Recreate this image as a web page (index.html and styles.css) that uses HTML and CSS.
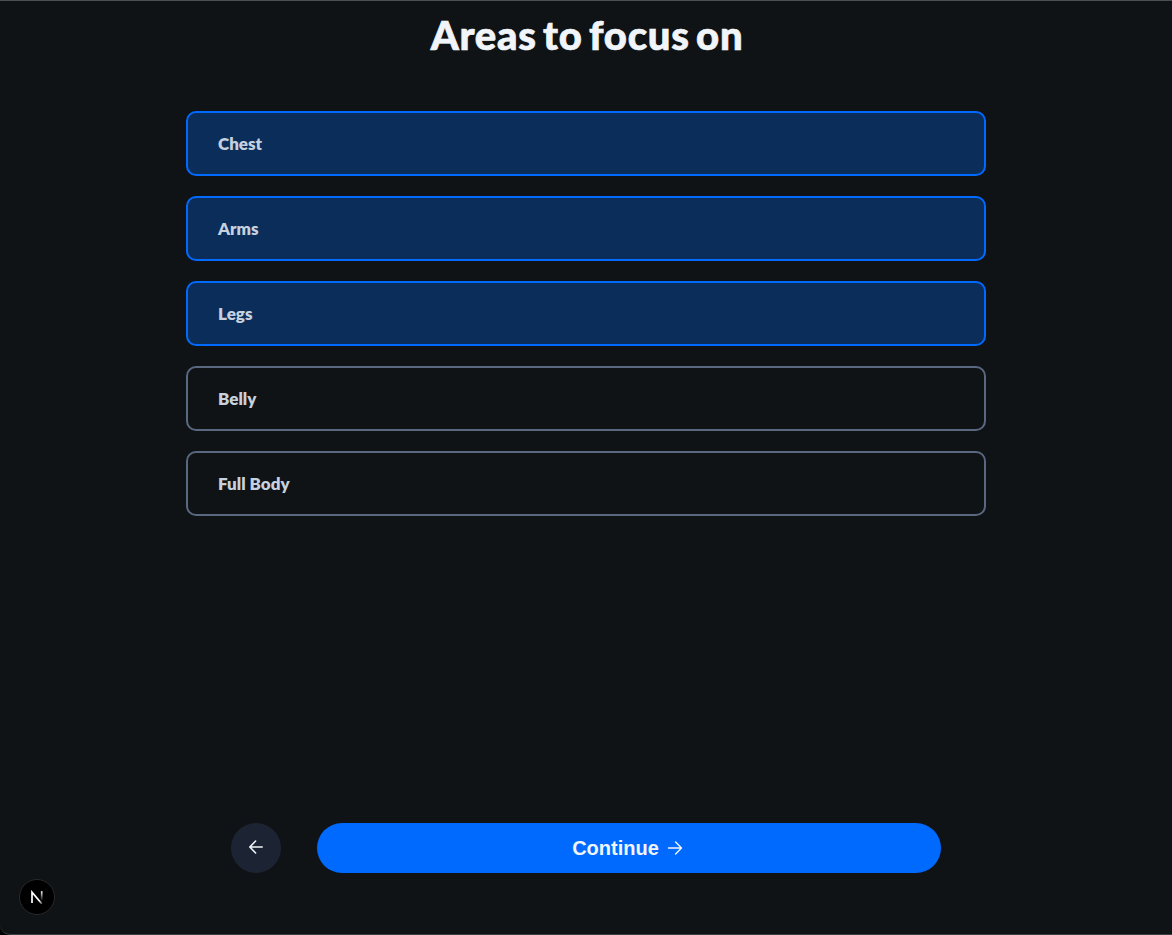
FILE: index.html
```html
<!DOCTYPE html>
<html lang="en">
<head>
<meta charset="utf-8">
<title>Areas to focus on</title>
<link rel="stylesheet" href="styles.css">
</head>
<body>
<main class="page">
  <h1 class="title">Areas to focus on</h1>
  <div class="options">
    <div class="option selected">Chest</div>
    <div class="option selected">Arms</div>
    <div class="option selected">Legs</div>
    <div class="option">Belly</div>
    <div class="option">Full Body</div>
  </div>
  <footer class="actions">
    <button class="back" aria-label="Back">
      <svg width="20" height="20" viewBox="0 0 20 20" fill="none" stroke="currentColor" stroke-width="1.6" stroke-linecap="round" stroke-linejoin="round"><path d="M16.2 10H4M9.6 4L3.8 10l5.8 6"/></svg>
    </button>
    <button class="continue"><span>Continue</span>
      <svg width="16" height="16" viewBox="0 0 16 16" fill="none" stroke="currentColor" stroke-width="1.4" stroke-linecap="round" stroke-linejoin="round"><path d="M1.5 8h13M8.6 2l5.9 6-5.9 6"/></svg>
    </button>
  </footer>
</main>
<div class="badge">
  <svg width="14" height="14" viewBox="0 0 14 14" fill="none" stroke-width="1.7">
    <defs>
      <linearGradient id="diag" gradientUnits="userSpaceOnUse" x1="7" y1="7" x2="12" y2="14"><stop stop-color="#fff"/><stop offset=".5" stop-color="#fff"/><stop offset="1" stop-color="#fff" stop-opacity=".3"/></linearGradient>
      <linearGradient id="stem" gradientUnits="userSpaceOnUse" x1="11" y1="1" x2="11" y2="11"><stop stop-color="#fff"/><stop offset="1" stop-color="#fff" stop-opacity="0"/></linearGradient>
    </defs>
    <path d="M2 13V2.2l9.8 11.6" stroke="url(#diag)"/>
    <path d="M11.7 1.2v9.8" stroke="url(#stem)"/>
  </svg>
</div>
</body>
</html>
```
FILE: styles.css
```css
* { box-sizing: border-box; }
html { background: #000; }
body {
  margin: 0;
  height: 935px;
  overflow: hidden;
  font-family: Lato, sans-serif;
}
.page {
  height: 935px;
  display: flex;
  flex-direction: column;
  align-items: center;
  padding: 10px 0 61px;
  background: #0f1316;
  border-top: 1px solid #4b4f51;
  border-bottom: 1px solid #3c3f41;
  border-bottom-left-radius: 10px;
}
.title {
  margin: 0;
  padding-left: 2px;
  font-size: 40px;
  line-height: 48px;
  font-weight: 900;
  letter-spacing: 0.75px;
  word-spacing: -3.8px;
  -webkit-text-stroke: 0.7px #f1f5f9;
  color: #f1f5f9;
}
.options {
  width: 800px;
  margin-top: 52px;
  display: flex;
  flex-direction: column;
  gap: 20px;
}
.option {
  height: 65px;
  display: flex;
  align-items: center;
  padding: 0 30px;
  border: 2px solid #596780;
  border-radius: 10px;
  font-size: 17px;
  font-weight: 800;
  color: #c5d1df;
}
.option.selected {
  background: #0b2d59;
  border-color: #006aff;
}
.actions {
  width: 710px;
  margin-top: auto;
  display: flex;
  gap: 36px;
}
button {
  border: 0;
  padding: 0;
  display: flex;
  align-items: center;
  justify-content: center;
  height: 50px;
  border-radius: 25px;
  color: #f1f5f9;
}
.back {
  width: 50px;
  padding-bottom: 2px;
  background: #1c2433;
}
.continue {
  flex: 1;
  gap: 8px;
  padding-right: 3px;
  background: #006aff;
  font: 700 20px "Liberation Sans", Arial, sans-serif;
}
.badge {
  position: absolute;
  left: 19px;
  top: 879px;
  width: 36px;
  height: 36px;
  display: flex;
  align-items: center;
  justify-content: center;
  border-radius: 50%;
  background: #000;
  border: 1px solid #282a2c;
}
```
